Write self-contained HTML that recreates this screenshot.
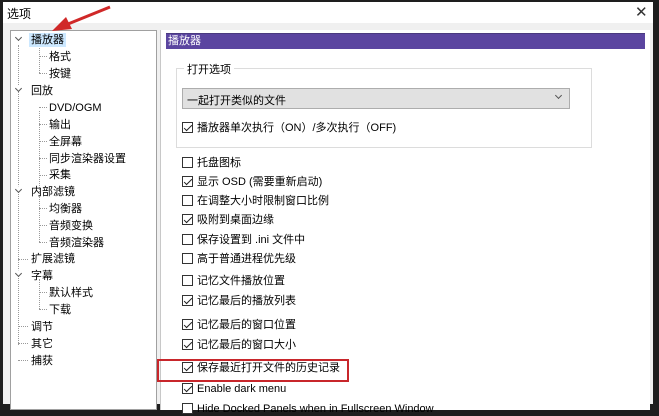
<!DOCTYPE html>
<html><head><meta charset="utf-8"><style>
*{margin:0;padding:0;box-sizing:border-box}
body{width:659px;height:404px;overflow:hidden;background:#1e1e1e;position:relative;font-family:"Liberation Sans","Noto Sans CJK SC",sans-serif;font-size:11px;color:#000}
.win{position:absolute;left:3px;top:2px;width:650px;height:402px;background:#f0f0f0}
.title{position:absolute;left:0;top:0;width:650px;height:21px;background:#fff}
.title span{position:absolute;left:4px;top:3px;font-size:12px}
.x{position:absolute;left:632px;top:1px;font-size:15px;color:#333}
.tree{position:absolute;left:7px;top:28px;width:147px;height:380px;background:#fff;border:1px solid #a0a0a0}
.t{position:absolute;white-space:nowrap;font-size:11px;line-height:14px}
.sel{background:#cce8ff}
.dv{position:absolute;border-left:1px dotted #999}
.dh{position:absolute;border-top:1px dotted #999;width:8px}
.chev{position:absolute;width:5px;height:5px;border:solid #555;border-width:0 1px 1px 0;transform:rotate(45deg);background:#fff}
.panel{position:absolute;left:157px;top:28px;width:490px;height:380px;background:#fff;border-left:1px solid #c8c8c8}
.hdr{position:absolute;left:5px;top:3px;width:479px;height:16px;background:#5b45a0;color:#fff;font-size:11px;padding:1px 2px;border-top:1px solid #4a3a80;line-height:13px}
.grp{position:absolute;left:15px;top:38px;width:416px;height:80px;border:1px solid #dcdcdc}
.grp .lg{position:absolute;left:7px;top:-8px;background:#fff;padding:0 3px}
.sel2{position:absolute;left:21px;top:58px;width:388px;height:21px;background:#e1e1e1;border:1px solid #adadad;padding:3px 4px}
.cb{position:absolute;left:21px;white-space:nowrap;line-height:14px}
.cb i{display:inline-block;width:11px;height:11px;border:1px solid #333;vertical-align:-2px;margin-right:4px;position:relative;background:#fff}
.cb i.c::after{content:"";position:absolute;left:3px;top:0px;width:3px;height:7px;border:solid #222;border-width:0 1.3px 1.3px 0;transform:rotate(45deg)}
</style></head><body>
<div class="win">
<div class="title"><span>选项</span><div class="x">✕</div></div>
<div class="tree">
<div class="dv" style="left:7px;top:14px;height:300px"></div>
<div class="dv" style="left:28px;top:14px;height:28px"></div>
<div class="dv" style="left:28px;top:80px;height:81px"></div>
<div class="dv" style="left:28px;top:164px;height:47px"></div>
<div class="dv" style="left:28px;top:248px;height:30px"></div>
<span class="chev" style="left:5px;top:4px"></span>
<span class="chev" style="left:5px;top:55px"></span>
<span class="chev" style="left:5px;top:156px"></span>
<span class="chev" style="left:5px;top:240px"></span>
<div class="t sel" style="left:18px;top:2px;padding:0 2px">播放器</div>
<div class="dh" style="left:28px;top:25px"></div><div class="t" style="left:38px;top:19px">格式</div>
<div class="dh" style="left:28px;top:42px"></div><div class="t" style="left:38px;top:36px">按键</div>
<div class="t" style="left:20px;top:53px">回放</div>
<div class="dh" style="left:28px;top:76px"></div><div class="t" style="left:38px;top:70px">DVD/OGM</div>
<div class="dh" style="left:28px;top:93px"></div><div class="t" style="left:38px;top:87px">输出</div>
<div class="dh" style="left:28px;top:110px"></div><div class="t" style="left:38px;top:104px">全屏幕</div>
<div class="dh" style="left:28px;top:127px"></div><div class="t" style="left:38px;top:121px">同步渲染器设置</div>
<div class="dh" style="left:28px;top:144px"></div><div class="t" style="left:38px;top:137px">采集</div>
<div class="t" style="left:20px;top:154px">内部滤镜</div>
<div class="dh" style="left:28px;top:177px"></div><div class="t" style="left:38px;top:171px">均衡器</div>
<div class="dh" style="left:28px;top:194px"></div><div class="t" style="left:38px;top:188px">音频变换</div>
<div class="dh" style="left:28px;top:211px"></div><div class="t" style="left:38px;top:205px">音频渲染器</div>
<div class="dh" style="left:7px;top:228px;width:10px"></div><div class="t" style="left:20px;top:221px">扩展滤镜</div>
<div class="t" style="left:20px;top:238px">字幕</div>
<div class="dh" style="left:28px;top:261px"></div><div class="t" style="left:38px;top:255px">默认样式</div>
<div class="dh" style="left:28px;top:278px"></div><div class="t" style="left:38px;top:272px">下载</div>
<div class="dh" style="left:7px;top:295px;width:10px"></div><div class="t" style="left:20px;top:289px">调节</div>
<div class="dh" style="left:7px;top:312px;width:10px"></div><div class="t" style="left:20px;top:306px">其它</div>
<div class="dh" style="left:7px;top:329px;width:10px"></div><div class="t" style="left:20px;top:323px">捕获</div>
</div>
<div class="panel">
<div class="hdr">播放器</div>
<div class="grp"><span class="lg">打开选项</span></div>
<div class="sel2">一起打开类似的文件<span class="chev" style="right:8px;top:4px;background:transparent"></span></div>
<div class="cb" style="top:91px"><i class="c"></i>播放器单次执行（ON）/多次执行（OFF)</div>
<div class="cb" style="top:126px"><i></i>托盘图标</div>
<div class="cb" style="top:145px"><i class="c"></i>显示 OSD (需要重新启动)</div>
<div class="cb" style="top:164px"><i></i>在调整大小时限制窗口比例</div>
<div class="cb" style="top:183px"><i class="c"></i>吸附到桌面边缘</div>
<div class="cb" style="top:203px"><i></i>保存设置到 .ini 文件中</div>
<div class="cb" style="top:222px"><i></i>高于普通进程优先级</div>
<div class="cb" style="top:244px"><i></i>记忆文件播放位置</div>
<div class="cb" style="top:264px"><i class="c"></i>记忆最后的播放列表</div>
<div class="cb" style="top:288px"><i class="c"></i>记忆最后的窗口位置</div>
<div class="cb" style="top:308px"><i class="c"></i>记忆最后的窗口大小</div>
<div class="cb" style="top:331px"><i class="c"></i>保存最近打开文件的历史记录</div>
<div class="cb" style="top:352px"><i class="c"></i>Enable dark menu</div>
<div class="cb" style="top:372px"><i></i>Hide Docked Panels when in Fullscreen Window</div>
</div>
</div>
<div style="position:absolute;left:157px;top:359px;width:192px;height:23px;border:2px solid #c8262b"></div>
<svg style="position:absolute;left:0;top:0" width="659" height="404"><line x1="110" y1="7" x2="68" y2="24" stroke="#d02828" stroke-width="3"/><polygon points="52,31 66,17 72,29" fill="#d02828"/></svg>
</body></html>
